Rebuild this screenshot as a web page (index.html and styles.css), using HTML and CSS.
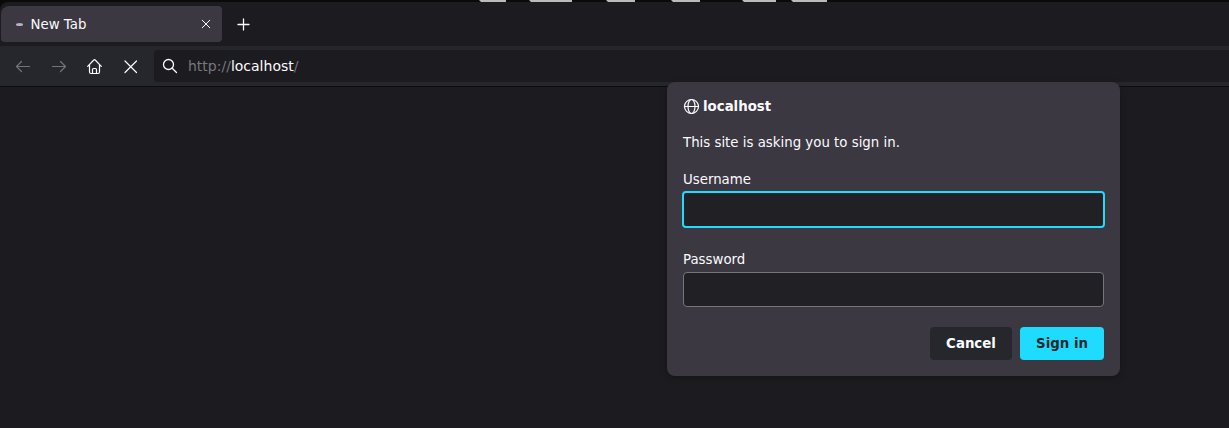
FILE: index.html
```html
<!DOCTYPE html>
<html lang="en">
<head>
<meta charset="utf-8">
<title>New Tab</title>
<link rel="stylesheet" href="styles.css">
</head>
<body>
<div class="browser">
  <header class="tabs">
    <div class="tab">
      <span class="throbber"></span>
      <span class="tab-title">New Tab</span>
      <svg class="tab-close" width="10" height="10" viewBox="0 0 10 10"><path d="M1.200 1.200l7.600 7.600M8.800 1.200L1.200 8.800"/></svg>
    </div>
    <svg class="new-tab" width="14" height="14" viewBox="0 0 14 14"><path d="M7.500 2v11M2 7.500h11"/></svg>
  </header>
  <nav class="toolbar">
    <svg class="icon dim" viewBox="0 0 16 16"><path d="M14.500 8.500H1.500M6.500 3.500l-5 5 5 5"/></svg>
    <svg class="icon dim" viewBox="0 0 16 16"><path d="M1.500 8.500h13M9.500 3.500l5 5-5 5"/></svg>
    <svg class="icon" viewBox="0 0 16 16"><path d="M.7 8.300L6.800 2q.7-.7 1.400 0l6.100 6.300M2.500 6.700v7q0 1.800 1.500 1.800h7q1.500 0 1.500-1.800v-7M5.500 15.500v-4q0-1 1-1h2q1 0 1 1v4"/></svg>
    <svg class="icon" viewBox="0 0 16 16"><path d="M2 3l11.500 11.500M13.500 3L2 14.500"/></svg>
    <div class="urlbar">
      <svg class="search" viewBox="0 0 16 16"><circle cx="6.500" cy="6.500" r="5"/><path d="M10.200 10.200l4.300 4.300"/></svg>
      <span class="url">http://<b>localhost</b>/</span>
    </div>
  </nav>
  <main class="page"></main>
</div>
<svg class="desktop" width="1229" height="2" viewBox="0 0 1229 2"><path d="M479 0h27v2h-25zM529 0h43v2h-41zM606 0h29v2h-27zM671 0h29v2h-27zM742 0h34v2h-32zM791 0h36v2h-34z"/></svg>
<form class="dialog">
  <div class="origin">
    <svg class="globe" viewBox="0 0 16 16"><circle cx="8.500" cy="8.500" r="7"/><ellipse cx="8.500" cy="8.500" rx="3.500" ry="7"/><path d="M1.500 8.500h14"/></svg>
    <strong>localhost</strong>
  </div>
  <p class="message">This site is asking you to sign in.</p>
  <label class="field">Username<input class="input focused" type="text"></label>
  <label class="field">Password<input class="input" type="password"></label>
  <div class="actions">
    <button class="button cancel" type="button">Cancel</button>
    <button class="button primary" type="button">Sign in</button>
  </div>
</form>
</body>
</html>
```

FILE: styles.css
```css
* { box-sizing: border-box; }
body {
  margin: 0;
  height: 428px;
  overflow: hidden;
  padding-top: 2px;
  background: #0a0a0a;
  color: #fbfbfe;
  font: 13.333px/16px "DejaVu Sans", sans-serif;
}
svg { fill: none; stroke: currentColor; stroke-linecap: round; stroke-linejoin: round; flex: none; overflow: visible; }
.desktop { position: absolute; left: 0; top: 0; fill: #bbb; stroke: none; }
.browser {
  height: 426px;
  display: flex;
  flex-direction: column;
  background: #1c1b1f;
  border-top-left-radius: 8px;
}
.tabs { height: 44px; display: flex; align-items: center; padding-left: 1px; }
.tab {
  width: 221px;
  height: 36px;
  display: flex;
  align-items: center;
  padding: 0 11px 0 15px;
  border-radius: 4px;
  border-top-left-radius: 8px;
  background: #3b3842;
}
.throbber { width: 7px; height: 3px; margin-right: 7.500px; border-radius: 50%; background: #b5b4b9; }
.tab-title { flex: 1; padding-top: 2px; }
.new-tab { margin-left: 14px; stroke-width: 1.3; }
.toolbar {
  height: 41px;
  display: flex;
  align-items: center;
  gap: 20px;
  padding-left: 15px;
  background: #26272c;
  border-bottom: 1px solid #0c0c0d;
}
.icon { width: 16px; height: 16px; stroke-width: 1.2; }
.dim { color: #737378; }
.urlbar {
  flex: 1;
  height: 32px;
  display: flex;
  align-items: center;
  gap: 10px;
  margin-left: -5px;
  padding-left: 8px;
  border-radius: 4px 0 0 4px;
  background: #1c1b1f;
}
.search { width: 16px; height: 16px; stroke-width: 1.3; }
.url { color: #77777c; font-size: 14px; }
.url b { color: #fbfbfe; font-weight: normal; }
.page { flex: 1; }
.dialog {
  position: absolute;
  left: 667px;
  top: 82px;
  width: 453px;
  height: 294px;
  padding: 16px;
  border-radius: 8px;
  background: #3b3842;
  box-shadow: 0 2px 6px rgba(0, 0, 0, .25);
}
.origin { height: 16px; display: flex; align-items: center; gap: 4px; }
.origin strong { padding-top: 2px; }
.globe { width: 16px; height: 16px; stroke-width: 1.2; }
.message { margin: 21px 0; }
.field { display: block; height: 80px; }
.input {
  display: block;
  width: 421px;
  height: 35px;
  margin: 4px 0 0;
  border: 1px solid #76757b;
  border-radius: 4px;
  background: #212025;
  color: inherit;
  font: inherit;
  outline: none;
}
.focused { width: 423px; height: 37px; margin: 3px -1px 0; border: 2px solid #1fdcff; }
.actions { display: flex; justify-content: flex-end; gap: 8px; margin-top: -5px; }
.button { height: 33px; padding: 0; border: 0; border-radius: 4px; font: bold 13.333px/16px "DejaVu Sans", sans-serif; }
.cancel { width: 82px; background: #26272c; color: #fbfbfe; }
.primary { width: 84px; background: #1fdcff; color: #26272c; }
```
